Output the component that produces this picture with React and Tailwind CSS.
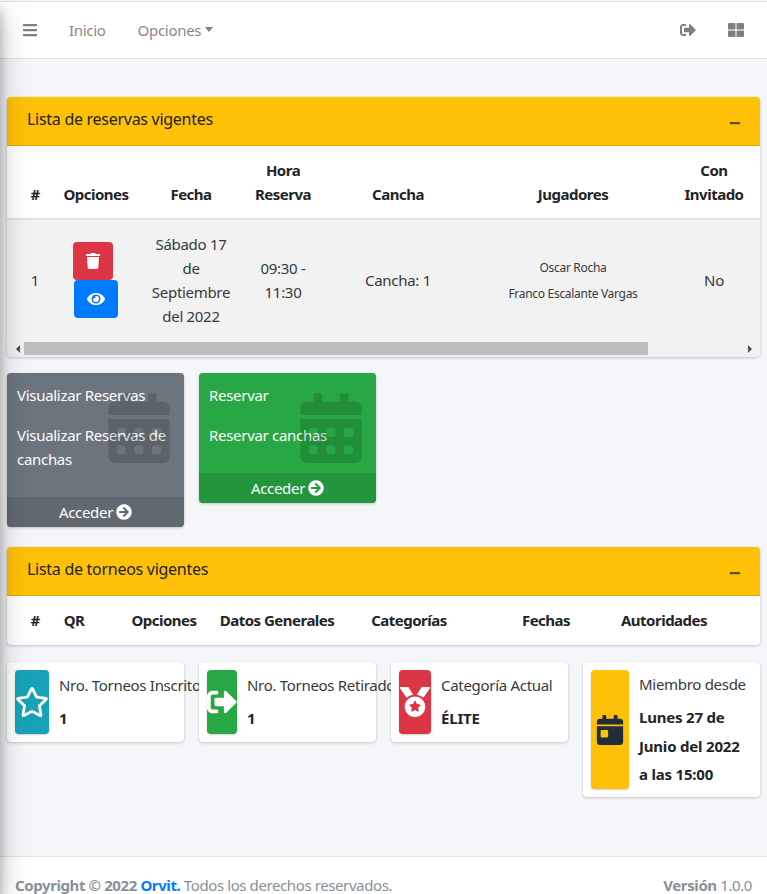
import React from "react";
import { FaBars, FaSignOutAlt, FaThLarge, FaMinus, FaTrash, FaEye, FaCalendarAlt, FaArrowCircleRight, FaRegStar, FaMedal, FaCalendarDay } from "react-icons/fa";

const Th = ({ children }) => (
  <th className="py-3 px-0 align-bottom text-center font-bold tracking-[-0.5px] text-[#212529]">{children}</th>
);

function Card({ title, children }) {
  return (
    <section className="rounded bg-white shadow-[0_0_1px_rgba(0,0,0,.125),0_1px_3px_rgba(0,0,0,.2)]">
      <header className="flex h-[49px] items-center justify-between rounded-t border-b border-[#dba700] bg-[#ffc107] pl-5 pr-[19px]">
        <h2 className="relative -top-[2px] text-[16px] font-normal tracking-[-0.28px] text-[#212529]">{title}</h2>
        <FaMinus size={12} className="relative top-[2px] text-[#5c4c15]" />
      </header>
      {children}
    </section>
  );
}

function SmallBox({ bg, lines }) {
  return (
    <div className={`relative overflow-hidden rounded text-white shadow-[0_0_1px_rgba(0,0,0,.125),0_1px_3px_rgba(0,0,0,.2)] ${bg}`}>
      <div className="p-2.5">
        {lines.map((l, i) => (
          <p key={i} className="mb-4">{l}</p>
        ))}
      </div>
      <FaCalendarAlt size={70} className="absolute right-[10px] top-5 text-black/15" />
      <div className="flex h-[30px] items-center justify-center gap-[3px] bg-black/10">
        Acceder <FaArrowCircleRight size={16} />
      </div>
    </div>
  );
}

function InfoBox({ iconBg, iconW, icon, label, value }) {
  return (
    <div className="relative flex rounded bg-white p-2 text-[#212529] shadow-[0_0_1px_rgba(0,0,0,.125),0_1px_3px_rgba(0,0,0,.2)]">
      <div className={`flex shrink-0 items-center justify-center rounded shadow-[0_1px_2px_rgba(0,0,0,.2)] ${iconW} ${iconBg}`}>{icon}</div>
      <div className="flex min-h-16 flex-col justify-center px-2.5 leading-[28.8px]">
        <span className="whitespace-nowrap text-[#343a40]">{label}</span>
        <span className="mt-1 font-bold tracking-[-0.2px]">{value}</span>
      </div>
    </div>
  );
}

export default function App() {
  return (
    <div className="relative h-screen overflow-hidden bg-[#f4f6f9] font-['Noto_Sans','Liberation_Sans',sans-serif] text-[15px] leading-6 tracking-[-0.3px] text-[#343a40]">
      <nav className="mt-px flex h-[58px] items-center justify-between border-y border-[#dee2e6] bg-white text-black/50">
        <div className="flex items-center">
          <FaBars size={16} className="ml-[22px]" />
          <a className="ml-[31px]">Inicio</a>
          <a className="ml-8 flex items-center">
            Opciones
            <span className="-mt-[2px] ml-1 h-0 w-0 border-x-[4.5px] border-t-[5px] border-x-transparent border-t-black/50" />
          </a>
        </div>
        <div className="flex items-center gap-8 pr-[23px]">
          <FaSignOutAlt size={16} />
          <FaThLarge size={16} />
        </div>
      </nav>

      <main className="px-[7px] pt-[38px]">
        <Card title="Lista de reservas vigentes">
          <div className="overflow-hidden">
            <table className="w-[758px] table-fixed border-collapse">
              <colgroup>
                <col className="w-[56px]" /><col className="w-[66px]" /><col className="w-[124px]" /><col className="w-[60px]" />
                <col className="w-[170px]" /><col className="w-[180px]" /><col className="w-[102px]" />
              </colgroup>
              <thead className="border-b-2 border-[#dee2e6]">
                <tr>
                  <Th>#</Th><Th>Opciones</Th><Th>Fecha</Th><Th>Hora Reserva</Th><Th>Cancha</Th><Th>Jugadores</Th>
                  <Th>Con<br />Invitado</Th>
                </tr>
              </thead>
              <tbody>
                <tr className="bg-[#f2f2f2] text-center">
                  <td className="py-3">1</td>
                  <td className="py-3">
                    <div className="flex flex-col items-center">
                      <button className="mr-[6px] flex h-[38px] w-10 items-center justify-center rounded bg-[#dc3545] text-white"><FaTrash size={16} /></button>
                      <button className="flex h-[38px] w-11 items-center justify-center rounded bg-[#007bff] text-white"><FaEye size={18} /></button>
                    </div>
                  </td>
                  <td className="py-3">Sábado 17<br />de<br />Septiembre<br />del 2022</td>
                  <td className="py-3">09:30 -<br />11:30</td>
                  <td className="py-3">Cancha: 1</td>
                  <td className="py-3"><span className="text-[12px]">Oscar Rocha<br />Franco Escalante Vargas</span></td>
                  <td className="py-3">No</td>
                </tr>
              </tbody>
            </table>
          </div>
          <div className="flex h-[17px] items-start rounded-b bg-[#f1f1f1] pt-[2px]">
            <div className="flex h-[13px] w-[17px] items-center justify-end pr-[4px]">
              <span className="h-0 w-0 border-y-[4px] border-r-[4px] border-y-transparent border-r-[#505050]" />
            </div>
            <div className="h-[13px] w-[624px] bg-[#bebebe]" />
            <div className="ml-auto flex h-[13px] w-[17px] items-center pl-[5px]">
              <span className="h-0 w-0 border-y-[4px] border-l-[4px] border-y-transparent border-l-[#505050]" />
            </div>
          </div>
        </Card>

        <div className="mt-4 grid grid-cols-4 items-start gap-x-[15px]">
          <SmallBox bg="bg-[#6c757d]" lines={["Visualizar Reservas", "Visualizar Reservas de canchas"]} />
          <SmallBox bg="bg-[#28a745]" lines={["Reservar", "Reservar canchas"]} />
        </div>

        <div className="mt-5">
          <Card title="Lista de torneos vigentes">
            <div className="overflow-hidden pb-px">
              <table className="w-[736px] table-fixed border-collapse">
                <colgroup>
                  <col className="w-[56px]" /><col className="w-[22px]" /><col className="w-[158px]" /><col className="w-[68px]" />
                  <col className="w-[196px]" /><col className="w-[78px]" /><col className="w-[158px]" />
                </colgroup>
                <thead>
                  <tr>
                    <Th>#</Th><Th>QR</Th><Th>Opciones</Th><Th><span className="flex justify-center whitespace-nowrap">Datos Generales</span></Th><Th>Categorías</Th><Th>Fechas</Th><Th>Autoridades</Th>
                  </tr>
                </thead>
              </table>
            </div>
          </Card>
        </div>

        <div className="mb-[59px] mt-[17px] grid grid-cols-4 items-start gap-x-[15px]">
          <InfoBox iconW="w-[34px]" iconBg="bg-[#17a2b8]" icon={<FaRegStar size={34} className="shrink-0 text-white" />} label="Nro. Torneos Inscrito" value="1" />
          <InfoBox iconW="w-[30px]" iconBg="bg-[#28a745]" icon={<FaSignOutAlt size={30} className="shrink-0 text-white" />} label="Nro. Torneos Retirado" value="1" />
          <InfoBox iconW="w-[32px]" iconBg="bg-[#dc3545]" icon={<FaMedal size={30} className="shrink-0 text-white" />} label="Categoría Actual" value="ÉLITE" />
          <InfoBox iconW="w-[38px]" iconBg="bg-[#ffc107]" icon={<FaCalendarDay size={30} className="shrink-0 text-[#1f2d3d]" />} label="Miembro desde" value={<>Lunes 27 de<br />Junio del 2022<br />a las 15:00</>} />
        </div>
      </main>

      <footer className="flex justify-between border-t border-[#dee2e6] bg-white px-[15px] pt-4 tracking-[-0.4px] text-[#869099]">
        <span><b>Copyright © 2022 <a className="text-[#007bff]">Orvit.</a></b> Todos los derechos reservados.</span>
        <span><b>Versión</b> 1.0.0</span>
      </footer>

      <div className="absolute -left-[250px] top-0 h-full w-[250px] shadow-[0_14px_28px_rgba(0,0,0,.25),0_10px_10px_rgba(0,0,0,.22)]" />
    </div>
  );
}
